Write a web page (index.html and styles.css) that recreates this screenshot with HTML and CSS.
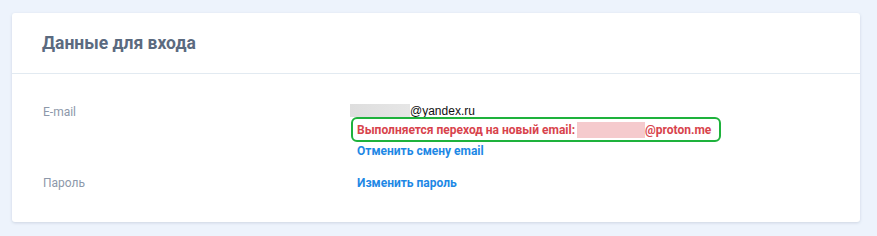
FILE: index.html
```html
<!DOCTYPE html>
<html lang="ru">

<head>
  <meta charset="UTF-8">
  <meta name="viewport" content="width=device-width, initial-scale=1.0">
  <title>Данные для входа</title>

  <link rel="stylesheet" href="styles.css">
</head>

<body>
  <div class="card">
    <div class="card-header">Данные для входа</div>
    <div class="card-body">
      <div class="row">
        <div class="label">E-mail</div>
        <div class="value">
          <div class="current"><span class="mask"></span>@yandex.ru</div>
          <div class="pending">Выполняется переход на новый email:<span class="mask pink"></span>@proton.me</div>
          <a class="link" href="#">Отменить смену email</a>
        </div>
      </div>
      <div class="row row-password">
        <div class="label">Пароль</div>
        <div class="value">
          <a class="link" href="#">Изменить пароль</a>
        </div>
      </div>
    </div>
  </div>
</body>

</html>
```

FILE: styles.css
```css
* {
  margin: 0;
  padding: 0;
  box-sizing: border-box;
}

body {
  background-color: #edf3fc;
  padding: 13px 17px 14px 12px;
  font-family: Roboto, "Noto Sans", sans-serif;
}

.card {
  width: 848px;
  height: 209px;
  background-color: #fff;
  border-radius: 3px;
  box-shadow: 0 1px 3px rgba(60, 80, 110, 0.18);
}

.card-header {
  height: 61px;
  padding: 17px 30px 0;
  border-bottom: 1px solid #e2eaf1;
  font-size: 17.5px;
  font-weight: bold;
  line-height: 26px;
  color: #5b6a7f;
}

.card-body {
  padding: 30px 0 0 31px;
}

.row {
  display: flex;
  align-items: flex-start;
}

.row-password {
  margin-top: 17px;
}

.label {
  width: 307px;
  font-size: 12px;
  line-height: 16px;
  color: #8d98aa;
}

.row-password .label {
  line-height: 14px;
}

.value {
  display: flex;
  flex-direction: column;
  align-items: flex-start;
}

.current {
  display: flex;
  align-items: center;
  height: 13px;
  font-family: "Liberation Sans", Arial, sans-serif;
  font-size: 12px;
  color: #111;
}

.mask {
  display: inline-block;
  width: 60px;
  height: 13px;
  background: linear-gradient(90deg, #dedede, #e6e6e6);
}

.mask.pink {
  width: 68px;
  height: 16px;
  margin-left: 2px;
  background: #f5cacd;
}

.pending {
  display: flex;
  align-items: center;
  height: 25px;
  margin-left: 1px;
  padding: 0 8px 0 4px;
  border: 2px solid #1eb23c;
  border-radius: 6px;
  font-size: 12px;
  font-weight: bold;
  color: #d8434c;
}

.link {
  margin-left: 7px;
  font-size: 12px;
  font-weight: bold;
  line-height: 16px;
  color: #1e88e5;
  text-decoration: none;
}

.row-password .link {
  line-height: 14px;
}

.pending + .link {
  margin-top: 1px;
}
```
